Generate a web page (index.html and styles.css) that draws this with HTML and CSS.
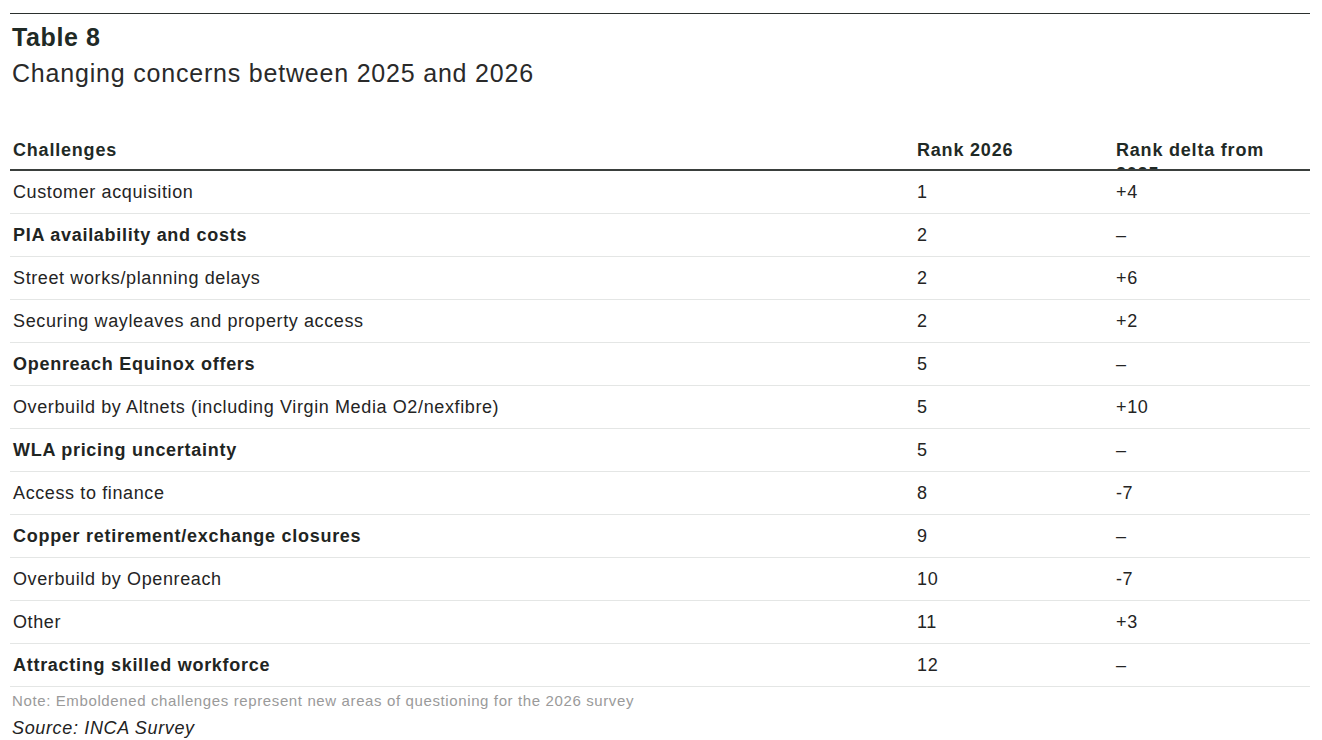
FILE: index.html
```html
<!DOCTYPE html>
<html lang="en">
<head>
<meta charset="utf-8">
<title>Table 8</title>
<link rel="stylesheet" href="styles.css">
</head>
<body>
<div class="figure">
  <h1 class="fig-num">Table 8</h1>
  <p class="fig-title">Changing concerns between 2025 and 2026</p>
  <table class="data">
    <colgroup>
      <col class="c-name">
      <col class="c-rank">
      <col class="c-delta">
    </colgroup>
    <thead>
      <tr>
        <th><div class="th-clip">Challenges</div></th>
        <th><div class="th-clip">Rank 2026</div></th>
        <th><div class="th-clip"><span class="wrap">Rank delta from 2025</span></div></th>
      </tr>
    </thead>
    <tbody>
      <tr><td>Customer acquisition</td><td>1</td><td>+4</td></tr>
      <tr class="new"><td>PIA availability and costs</td><td>2</td><td>–</td></tr>
      <tr><td>Street works/planning delays</td><td>2</td><td>+6</td></tr>
      <tr><td>Securing wayleaves and property access</td><td>2</td><td>+2</td></tr>
      <tr class="new"><td>Openreach Equinox offers</td><td>5</td><td>–</td></tr>
      <tr><td>Overbuild by Altnets (including Virgin Media O2/nexfibre)</td><td>5</td><td>+10</td></tr>
      <tr class="new"><td>WLA pricing uncertainty</td><td>5</td><td>–</td></tr>
      <tr><td>Access to finance</td><td>8</td><td>-7</td></tr>
      <tr class="new"><td>Copper retirement/exchange closures</td><td>9</td><td>–</td></tr>
      <tr><td>Overbuild by Openreach</td><td>10</td><td>-7</td></tr>
      <tr><td>Other</td><td>11</td><td>+3</td></tr>
      <tr class="new"><td>Attracting skilled workforce</td><td>12</td><td>–</td></tr>
    </tbody>
  </table>
  <p class="note">Note: Emboldened challenges represent new areas of questioning for the 2026 survey</p>
  <p class="source">Source: INCA Survey</p>
</div>
</body>
</html>
```
FILE: styles.css
```css
html, body {
  margin: 0;
  padding: 0;
  background: #ffffff;
}
body {
  font-family: "Liberation Sans", Arial, sans-serif;
  color: #222222;
}
.figure {
  margin: 13px 12px 0 10px;
  border-top: 1px solid #2b302e;
}
.fig-num {
  margin: 0;
  padding: 9px 0 0 2px;
  font-size: 25px;
  line-height: 28px;
  font-weight: 700;
  letter-spacing: 0.6px;
  color: #1f2a26;
}
.fig-title {
  margin: 0;
  padding: 7px 0 0 2px;
  font-size: 25px;
  line-height: 30px;
  font-weight: 400;
  color: #2a2a2a;
  letter-spacing: 0.8px;
}
.data {
  width: 100%;
  border-collapse: collapse;
  margin-top: 50px;
}
.c-name { width: 904px; }
.c-rank { width: 199px; }
.data th {
  text-align: left;
  font-weight: 700;
  font-size: 18px;
  letter-spacing: 0.8px;
  color: #1f2a26;
  padding: 0 0 0 3px;
  border-bottom: 2px solid #3a3f3d;
  vertical-align: top;
}
.th-clip {
  height: 31px;
  line-height: 24px;
  overflow: hidden;
}
.wrap {
  display: inline-block;
  max-width: 175px;
}
.data td {
  font-size: 18px;
  letter-spacing: 0.62px;
  height: 42px;
  padding: 0 0 0 3px;
  border-bottom: 1px solid #e4e6e5;
  vertical-align: middle;
  color: #242424;
}
.data tr.new td:first-child {
  font-weight: 700;
  letter-spacing: 0.72px;
  color: #1f2523;
}
.note {
  margin: 5px 0 0 2px;
  font-size: 15px;
  line-height: 18px;
  letter-spacing: 0.62px;
  color: #9a9a9a;
}
.source {
  margin: 7px 0 0 2px;
  font-size: 18px;
  line-height: 22px;
  letter-spacing: 0.65px;
  font-style: italic;
  color: #222222;
}
```
